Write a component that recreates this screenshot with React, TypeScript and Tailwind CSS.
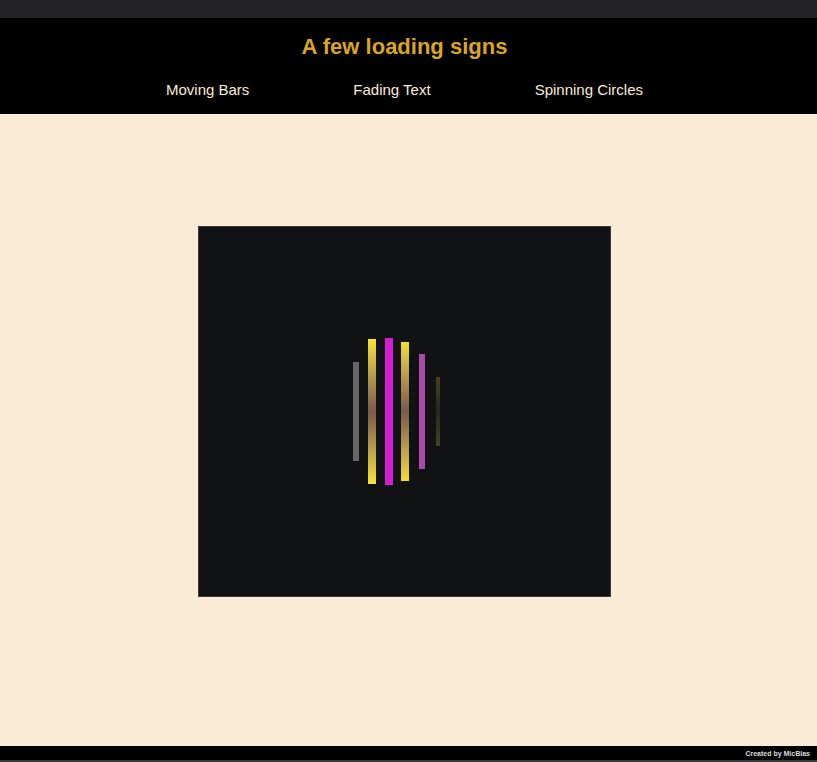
export default function App() {
  const font = { fontFamily: '"Liberation Sans", Arial, sans-serif' };
  return (
    <div className="w-full h-[762px] flex flex-col bg-[#faebd7]" style={font}>
      <div className="h-[18px] bg-[#222227] shrink-0" />
      <header className="h-[96px] bg-black shrink-0 flex flex-col items-center pr-[8px]">
        <h1 className="mt-[16px] h-[26px] leading-[26px] text-[22px] font-bold text-[#daa520]">A few loading signs</h1>
        <nav className="mt-[21px] flex gap-[104px] text-[15px] leading-[18px] text-[#faebd7]">
          <a>Moving Bars</a>
          <a>Fading Text</a>
          <a>Spinning Circles</a>
        </nav>
      </header>
      <main className="flex-1 flex justify-center items-start pt-[112px] pr-[8px]">
        <div className="w-[413px] h-[371px] bg-[#111214] border border-[#3a3a3a] flex items-center justify-center pr-[17px]">
          <div className="flex items-center">
            <div className="w-[6px] h-[99px] bg-[#666666]" />
            <div className="ml-[9px] w-[8px] h-[145px] bg-gradient-to-b from-[#f8e432] via-[#7a5a4a] to-[#f8e432]" />
            <div className="ml-[9px] w-[8px] h-[147px] bg-[#d21dd2]" />
            <div className="ml-[8px] w-[8px] h-[139px] bg-gradient-to-b from-[#f5de30] via-[#7a5a4a] to-[#f5de30]" />
            <div className="ml-[10px] w-[6px] h-[115px] bg-[#a84ca8]" />
            <div className="ml-[11px] w-[4px] h-[69px] bg-gradient-to-b from-[#4a4020] via-[#2a2620] to-[#4a4020]" />
          </div>
        </div>
      </main>
      <footer className="h-[14px] bg-black shrink-0 flex items-center justify-end pr-[7px]">
        <span className="text-[7px] font-bold text-[#dddddd] leading-none">Created by MicBlas</span>
      </footer>
      <div className="h-[2px] bg-[#3a3a3a] shrink-0" />
    </div>
  );
}
